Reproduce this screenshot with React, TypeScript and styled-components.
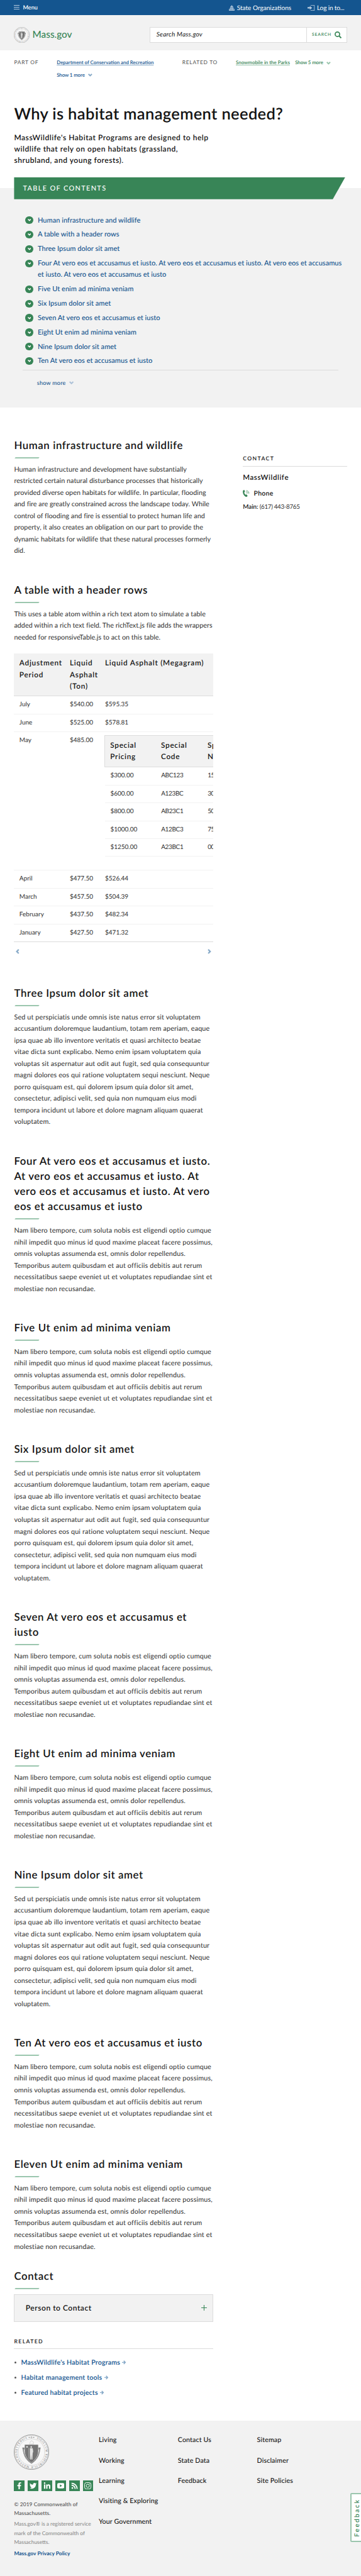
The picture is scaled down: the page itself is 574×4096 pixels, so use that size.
import React from 'react';
import styled, { createGlobalStyle } from 'styled-components';
import { FaFacebookF, FaTwitter, FaLinkedinIn, FaRss } from 'react-icons/fa';

const ink = '#141414';
const blue = '#14558f';
const blueSoft = '#89abc9';
const green = '#388557';
const greenSoft = '#9bc6ae';
const panel = '#f2f2f2';
const rule = '#dcdcdc';

/* 1rem is ten design pixels */
const Global = createGlobalStyle`
  html { font-size: 5.6055px; }
  body {
    margin: 0;
    background: #fff;
    color: ${ink};
    font-family: Lato, "Noto Sans", sans-serif;
    font-size: 2rem;
    font-weight: 400;
    overflow-x: hidden;
    text-rendering: geometricPrecision;
  }
  *, *::before, *::after { box-sizing: border-box; }
  h1, h2, h3, p, ul { margin: 0; padding: 0; font-weight: inherit; }
  ul { list-style: none; }
  svg { display: block; flex: none; }
`;

const Page = styled.div`
  position: relative;
  width: 102.4rem;
  height: 4096px;
  overflow: hidden;
  white-space: nowrap;
`;

/* ---------- header ---------- */
const TopBar = styled.nav`
  display: flex;
  justify-content: space-between;
  height: 4.3rem;
  padding: 0 4rem;
  background: ${blue};
  color: #fff;
`;
const MenuButton = styled.div`
  display: flex;
  align-items: center;
  gap: 1rem;
  height: 3.98rem;
  font-size: 1.63rem;
  font-weight: 600;
`;
const Burger = styled.span`
  width: 1.5rem;
  height: 1.2rem;
  border-top: 1px solid #b6cade;
  border-bottom: 1px solid #b6cade;
  background: linear-gradient(#b6cade, #b6cade) center / 100% 1px no-repeat;
`;
const Utilities = styled.div`
  display: flex;
  height: 4.5rem;
  font-size: 1.8rem;
`;
const Utility = styled.div<{ $w: number; $gap: number; $track?: number }>`
  display: flex;
  align-items: center;
  gap: ${(p) => p.$gap}rem;
  width: ${(p) => p.$w}rem;
  letter-spacing: ${(p) => p.$track ?? 0}rem;
`;
const Masthead = styled.header`
  display: flex;
  justify-content: space-between;
  height: 10rem;
  padding: 3.3rem 4rem 0;
  background: ${panel};
`;
const Brand = styled.div`
  display: flex;
  align-items: center;
  gap: 0.7rem;
  height: 4.6rem;
  color: ${green};
  font-size: 2.73rem;
  font-weight: 500;
`;
const SearchBox = styled.div`
  display: flex;
  width: 56rem;
  height: 4.6rem;
  border: 1px solid ${rule};
  background: #fff;
`;
const SearchInput = styled.div`
  flex: 1;
  padding-left: 1.8rem;
  font-size: 1.8rem;
  font-style: italic;
  letter-spacing: 0.045rem;
  line-height: 4.1rem;
`;
const SearchButton = styled.div`
  display: flex;
  align-items: center;
  justify-content: space-between;
  width: 11.3rem;
  padding: 0 1.4rem;
  border-left: 1px solid ${rule};
  color: ${green};
  font-size: 1.2rem;
  font-weight: 600;
  letter-spacing: 0.15rem;
`;

/* ---------- relations + title ---------- */
const Relations = styled.div`
  display: flex;
  height: 15.12rem;
  padding: 1.77rem 0 0 4rem;
  font-size: 1.41rem;
  font-weight: 600;
  line-height: 3.5rem;
`;
const RelationLabel = styled.div<{ $w: number }>`
  width: ${(p) => p.$w}rem;
  color: #535353;
  font-size: 1.5rem;
  font-weight: 400;
  letter-spacing: 0.13rem;
`;
const RelationLinks = styled.div<{ $w: number; $green?: boolean }>`
  display: flex;
  flex-wrap: wrap;
  align-content: flex-start;
  column-gap: 1.5rem;
  width: ${(p) => p.$w}rem;
  color: ${(p) => (p.$green ? green : blue)};
`;
const Underlined = styled.span<{ $green?: boolean }>`
  text-decoration: underline;
  text-decoration-color: ${(p) => (p.$green ? greenSoft : blueSoft)};
  text-decoration-thickness: 1px;
  text-underline-offset: 1px;
`;
const Toggle = styled.span`
  display: flex;
  align-items: center;
  gap: 0.9rem;
  letter-spacing: -0.02rem;
`;
const Title = styled.h1`
  height: 6rem;
  padding-left: 4rem;
  font-size: 4.55rem;
  font-weight: 600;
  letter-spacing: 0.062rem;
  line-height: 6rem;
`;
const Intro = styled.p`
  height: 14.9rem;
  padding: 1.97rem 0 0 4rem;
  font-size: 2.15rem;
  font-weight: 600;
  letter-spacing: 0.091rem;
  line-height: 3.28rem;
`;

/* ---------- table of contents ---------- */
const Toc = styled.section`
  height: 65.2rem;
  padding-left: 4rem;
  background: linear-gradient(#fff 3rem, ${panel} 3rem);
`;
const TocHead = styled.h2`
  width: 93.9rem;
  height: 6.2rem;
  padding-left: 2.5rem;
  background: ${green};
  clip-path: polygon(0 0, 100% 0, calc(100% - 3.5rem) 100%, 0 100%);
  color: #fff;
  font-size: 1.95rem;
  font-weight: 500;
  letter-spacing: 0.24rem;
  line-height: 6.3rem;
`;
const TocList = styled.ul`
  width: 89.6rem;
  height: 48.55rem;
  margin-left: 2.4rem;
  padding: 4.42rem 0 0 0.8rem;
  border-bottom: 1px solid ${rule};
`;
const TocItem = styled.li`
  display: flex;
  gap: 1.3rem;
  margin-bottom: 0.77rem;
  color: ${blue};
  font-size: 1.98rem;
  font-weight: 500;
  line-height: 3.3rem;
`;
const TocDot = styled.span`
  display: grid;
  flex: none;
  place-items: center;
  width: 2.2rem;
  height: 2.2rem;
  margin-top: 0.45rem;
  border-radius: 50%;
  background: ${green};
`;
const ShowMore = styled.div`
  display: flex;
  align-items: center;
  gap: 0.9rem;
  height: 7rem;
  padding-left: 6.5rem;
  color: ${blue};
  font-size: 1.6rem;
  font-weight: 500;
  letter-spacing: 0.045rem;
`;

/* ---------- body ---------- */
const Columns = styled.main`
  display: flex;
  height: 571.1rem;
  padding: 8.68rem 4rem 0;
`;
const Article = styled.div`
  width: 56.4rem;
  margin-right: 8.5rem;
`;
const Block = styled.section<{ $after?: number }>`
  margin-bottom: ${(p) => p.$after ?? 7.16}rem;
`;
const Heading = styled.h2`
  font-size: 3rem;
  font-weight: 600;
  letter-spacing: 0.106rem;
  line-height: 4.3rem;
`;
const Accent = styled.div`
  width: 6.8rem;
  height: 0.34rem;
  margin: 1.23rem 0 1.58rem 0.2rem;
  background: ${greenSoft};
  transform: skewX(-35deg);
`;
const Copy = styled.p<{ $track?: number }>`
  color: #303030;
  font-size: 1.93rem;
  letter-spacing: ${(p) => p.$track ?? 0}rem;
  line-height: 3.303rem;
`;
const Sidebar = styled.aside`
  width: 29.5rem;
  padding-top: 4.7rem;
`;
const Caps = styled.h3`
  padding-bottom: 0.9rem;
  border-bottom: 1px solid ${rule};
  font-size: 1.54rem;
  font-weight: 600;
  letter-spacing: 0.247rem;
  line-height: 2.4rem;
`;
const Org = styled.div`
  margin-top: 1.8rem;
  font-size: 2.05rem;
  font-weight: 600;
  letter-spacing: 0.11rem;
  line-height: 2.8rem;
`;
const PhoneTitle = styled.div`
  display: flex;
  align-items: center;
  gap: 1.2rem;
  height: 2.8rem;
  margin-top: 1.6rem;
  font-size: 1.87rem;
  font-weight: 600;
  letter-spacing: 0.05rem;
`;
const PhoneLine = styled.div`
  margin-top: 1.2rem;
  color: #303030;
  font-size: 1.75rem;
  letter-spacing: -0.056rem;
  line-height: 2.6rem;
  b {
    color: ${ink};
    font-weight: 600;
    letter-spacing: 0;
  }
`;

/* ---------- data table ---------- */
const TableView = styled.div`
  height: 81.9rem;
  margin-top: 2.85rem;
  overflow: hidden;
  border-bottom: 1px solid ${rule};
`;
const HeadRow = styled.div`
  display: grid;
  grid-template-columns: 14.3rem 10rem 1fr;
  height: 12.1rem;
  padding: 1.05rem 0 0 1.5rem;
  border-bottom: 1px solid ${rule};
  background: ${panel};
  font-size: 2.1rem;
  font-weight: 600;
  letter-spacing: 0.135rem;
  line-height: 3.3rem;
`;
const Row = styled.div<{ $h?: number }>`
  display: grid;
  grid-template-columns: 14.3rem 10rem 1fr;
  height: ${(p) => p.$h ?? 5.1}rem;
  padding-left: 1.5rem;
  border-bottom: 1px solid ${panel};
  color: #303030;
  font-size: 1.78rem;
  line-height: 4.85rem;
  &:last-child { border-bottom: 0; }
`;
const Nested = styled.div`
  width: 50rem;
  margin: 0.85rem 0 0 -0.2rem;
`;
const NestedHead = styled.div`
  display: grid;
  grid-template-columns: 14.4rem 13.2rem 1fr;
  height: 9.1rem;
  padding: 1rem 0 0 1.5rem;
  border: 1px solid ${rule};
  background: ${panel};
  color: ${ink};
  font-size: 2.1rem;
  font-weight: 600;
  letter-spacing: 0.125rem;
  line-height: 3.3rem;
`;
const NestedRow = styled.div`
  display: grid;
  grid-template-columns: 14.4rem 13.2rem 1fr;
  height: 5.08rem;
  margin-left: 0.2rem;
  padding-left: 1.5rem;
  border-bottom: 1px solid ${panel};
  line-height: 4.85rem;
  span + span { letter-spacing: -0.06rem; }
`;
const Pager = styled.div`
  display: flex;
  align-items: center;
  justify-content: space-between;
  height: 5.1rem;
  padding: 0 0.3rem;
`;

/* ---------- contact + related ---------- */
const Accordion = styled.div`
  display: flex;
  align-items: center;
  justify-content: space-between;
  height: 7.7rem;
  padding: 0 1.6rem 0.2rem 3.1rem;
  border: 1px solid ${rule};
  background: ${panel};
  font-size: 2.15rem;
  font-weight: 600;
  letter-spacing: 0.092rem;
`;
const RelatedHead = styled(Caps)`
  margin-top: 4.3rem;
`;
const RelatedList = styled.ul`
  padding-top: 1.65rem;
`;
const RelatedItem = styled.li`
  display: flex;
  align-items: center;
  height: 4.28rem;
  color: ${blue};
  font-size: 1.9rem;
  font-weight: 600;
  letter-spacing: 0.031rem;
  svg { margin-left: 0.6rem; }
`;
const Bullet = styled.span`
  width: 0.6rem;
  height: 0.6rem;
  margin: 0 1.3rem 0 0.1rem;
  border-radius: 50%;
  background: #535353;
`;

/* ---------- footer ---------- */
const Footer = styled.footer`
  display: flex;
  height: 45rem;
  padding-left: 4rem;
  background: ${panel};
`;
const About = styled.div`
  width: 24rem;
  padding-top: 4rem;
  color: #535353;
  font-size: 1.5rem;
  line-height: 2.58rem;
`;
const Socials = styled.div`
  display: flex;
  gap: 0.9rem;
  margin: 3rem 0 2.45rem;
`;
const Social = styled.span`
  display: grid;
  place-items: center;
  width: 3rem;
  height: 3rem;
  background: ${green};
  color: #fff;
`;
const Copyright = styled.p`
  font-weight: 500;
  letter-spacing: 0.018rem;
`;
const Legal = styled.p`
  margin: 0.5rem 0;
  color: #868686;
`;
const Privacy = styled.p`
  padding-top: 0.1rem;
  color: ${blue};
  font-weight: 700;
  letter-spacing: 0.004rem;
`;
const FooterLinks = styled.ul`
  width: 22.45rem;
  padding-top: 2.75rem;
  font-size: 1.9rem;
  font-weight: 500;
  letter-spacing: 0.022rem;
  line-height: 5.77rem;
`;
const FeedbackTab = styled.div`
  position: absolute;
  top: 707.2rem;
  right: -0.4rem;
  display: grid;
  place-items: center;
  width: 3.4rem;
  height: 13.8rem;
  padding-left: 0.4rem;
  border: 2px solid ${greenSoft};
  border-radius: 2px;
  background: #fff;
  color: ${green};
  font-size: 1.85rem;
  font-weight: 600;
  letter-spacing: 0.38rem;
  span {
    writing-mode: vertical-rl;
    transform: rotate(180deg);
    line-height: 1;
  }
`;

/* ---------- drawings ---------- */
const r = (n: number) => `${n / 10}rem`;

const Chevron = ({ w = 12, color, turn = 0 }: { w?: number; color: string; turn?: number }) => (
  <svg viewBox="0 0 12 12" fill={color} width={r(w)} height={r(w)}>
    <path transform={`rotate(${turn} 6 6)`} d="M0 4.400 2.400 2 6 5.400 9.600 2 12 4.400 6 10.400z" />
  </svg>
);

const Arrow = () => (
  <svg viewBox="0 0 12 12" fill={blueSoft} width={r(12)} height={r(12)}>
    <path d="M0 4.800h6L3.900 2.400 5.900.6 11.400 6l-5.500 5.400-2-1.800L6 7.200H0z" />
  </svg>
);

const StateHouse = () => (
  <svg viewBox="0 0 16 16" fill="#b6cade" width={r(16)} height={r(16)}>
    <path d="M7.500 0h1v2.200C11 2.500 12.300 4.200 12.300 6.200H3.700C3.700 4.200 5 2.500 7.500 2.200z" />
    <path
      fillRule="evenodd"
      d="M3 7h10v4.200h3V16H0v-4.800h3zM4.300 8.500v1.600h1.500V8.500zm2.900 0v1.600h1.600V8.500zm2.900 0v1.600h1.600V8.500zM1.500 12.700v1.600H3v-1.600zm2.900 0v1.600h1.500v-1.600zm2.900 0v1.600h1.500v-1.600zm2.900 0v1.600h1.500v-1.600zm2.900 0v1.600h1.500v-1.600z"
    />
  </svg>
);

const LoginIcon = () => (
  <svg viewBox="0 0 20 16" fill="#b6cade" width={r(20)} height={r(16)}>
    <path d="M0 6h6.500V2.800L13 8l-6.500 5.200V10H0z" />
    <path d="M8.500 0H20v16H8.500v-1.500h10v-13h-10z" />
  </svg>
);

const Magnifier = () => (
  <svg viewBox="0 0 20 20" fill="none" stroke={green} width={r(20)} height={r(20)}>
    <circle cx="8" cy="8" r="6.400" strokeWidth="3" />
    <path d="M12.300 12.300 18.700 18.700" strokeWidth="3.600" />
  </svg>
);

const PhoneIcon = () => (
  <svg viewBox="0 0 19 20" fill={green} width={r(19)} height={r(20)}>
    <path d="M1.500 1 4.500.2 6.400 5.300 4.200 6.600c0 2.600 1.800 5.600 4 7.200l2.300-1.200 3.300 4.200-2.100 2.500c-1.300.7-3.300.5-5-1C2.400 15 .2 10.500.2 5.400.2 3.500.6 1.900 1.500 1z" />
    <g fill="none" stroke={green} strokeWidth="1.300">
      <path d="M9.500 7.500c1.300.2 2.200 1.200 2.300 2.600" />
      <path d="M9.800 4.600c2.900.2 4.900 2.400 5 5.500" />
      <path d="M10 1.700c4.500.3 7.600 3.600 7.800 8.400" />
    </g>
  </svg>
);

const Plus = () => (
  <svg viewBox="0 0 16 16" stroke={green} strokeWidth="1.900" width={r(16)} height={r(16)}>
    <path d="M8 0v16M0 8h16" />
  </svg>
);

const YouTube = () => (
  <svg viewBox="0 0 20 16" fill="#fff" width={r(20)} height={r(16)}>
    <path fillRule="evenodd" d="M4 .5h12Q20 .5 20 4.500v7q0 4-4 4H4q-4 0-4-4v-7Q0 .5 4 .5zM7.500 4.500v7L14 8z" />
  </svg>
);

const Instagram = () => (
  <svg viewBox="0 0 20 20" fill="none" stroke="#fff" strokeWidth="1.700" width={r(20)} height={r(20)}>
    <rect x="1" y="1" width="18" height="18" rx="5" />
    <circle cx="10" cy="10" r="4.500" />
    <circle cx="15.200" cy="4.800" r=".8" fill="#fff" strokeWidth=".6" />
  </svg>
);

const Seal = ({ size, id }: { size: number; id: string }) => (
  <svg viewBox="0 0 100 100" width={r(size)} height={r(size)}>
    <defs>
      <path id={id} d="M50 50m0 -40.500a40.500 40.500 0 1 1 -.01 0" />
    </defs>
    <circle cx="50" cy="50" r="49.300" fill="#f7f7f7" stroke="#757575" strokeWidth="1.200" />
    <circle cx="50" cy="50" r="47.300" fill="none" stroke="#8d8d8d" strokeWidth=".6" />
    <circle cx="50" cy="50" r="37.700" fill="none" stroke="#8d8d8d" strokeWidth=".9" strokeDasharray="1 .7" />
    <text fill="#757575" fontFamily="'Liberation Serif', serif" fontSize="8.200" fontWeight="400">
      <textPath href={`#${id}`} startOffset="15" textLength="226">
        SIGILLUM REIPUBLICÆ MASSACHUSETTENSIS
      </textPath>
    </text>
    <path d="M41 8l4-1.500v3zM59 8l-4-1.500v3z" fill="#757575" />
    <circle cx="50" cy="8" r="1.800" fill="none" stroke="#757575" strokeWidth="1" />
    <path d="M43 27h14M45 25c2-4 4-7 5-8l6 5-1 4" fill="none" stroke="#b5b5b5" strokeWidth=".9" />
    <path
      d="M27 38c0 5 0 10 2 15 2 8 6 15 12 21 3 3 6 5 9 7 3-2 6-4 9-7 6-6 10-13 12-21 2-5 2-10 2-15"
      fill="none"
      stroke="#7a7a7a"
      strokeWidth="3.200"
      strokeDasharray="2.600 .5"
    />
    <path d="M24 37h6v6h-5zM76 37h-6v6h5z" fill="#858585" />
    <path d="M31 29h38v17c0 14-8 26-19 33-11-7-19-19-19-33z" fill="#757575" />
    <path d="M37.500 31.800l.9 2.200 2.300.1-1.800 1.500.6 2.300-2-1.300-2 1.300.6-2.300-1.800-1.500 2.300-.1z" fill="#f2f2f2" />
    <circle cx="49.300" cy="35.500" r="2.300" fill="#e4e4e4" />
    <path d="M45.500 39h8l1.500 9-1.500 5-1 18h-2.500l-.6-14-1 14H46l-.6-19z" fill="#e4e4e4" />
    <path d="M42.500 37c-1 10-1 20 .5 32" fill="none" stroke="#dadada" strokeWidth=".8" />
  </svg>
);

/* ---------- content ---------- */
const Lines = ({ of }: { of: string[] }) => (
  <>
    {of.map((line, i) => (
      <React.Fragment key={i}>
        {i > 0 && <br />}
        {line}
      </React.Fragment>
    ))}
  </>
);

const sed = [
  'Sed ut perspiciatis unde omnis iste natus error sit voluptatem',
  'accusantium doloremque laudantium, totam rem aperiam, eaque',
  'ipsa quae ab illo inventore veritatis et quasi architecto beatae',
  'vitae dicta sunt explicabo. Nemo enim ipsam voluptatem quia',
  'voluptas sit aspernatur aut odit aut fugit, sed quia consequuntur',
  'magni dolores eos qui ratione voluptatem sequi nesciunt. Neque',
  'porro quisquam est, qui dolorem ipsum quia dolor sit amet,',
  'consectetur, adipisci velit, sed quia non numquam eius modi',
  'tempora incidunt ut labore et dolore magnam aliquam quaerat',
  'voluptatem.',
];
const nam = [
  'Nam libero tempore, cum soluta nobis est eligendi optio cumque',
  'nihil impedit quo minus id quod maxime placeat facere possimus,',
  'omnis voluptas assumenda est, omnis dolor repellendus.',
  'Temporibus autem quibusdam et aut officiis debitis aut rerum',
  'necessitatibus saepe eveniet ut et voluptates repudiandae sint et',
  'molestiae non recusandae.',
];
const human = [
  'Human infrastructure and development have substantially',
  'restricted certain natural disturbance processes that historically',
  'provided diverse open habitats for wildlife. In particular, flooding',
  'and fire are greatly constrained across the landscape today. While',
  'control of flooding and fire is essential to protect human life and',
  'property, it also creates an obligation on our part to provide the',
  'dynamic habitats for wildlife that these natural processes formerly',
  'did.',
];
const tableIntro = [
  'This uses a table atom within a rich text atom to simulate a table',
  'added within a rich text field. The richText.js file adds the wrappers',
  'needed for responsiveTable.js to act on this table.',
];
const sections: { title: string[]; body: string[]; track: number; after?: number }[] = [
  { title: ['Three Ipsum dolor sit amet'], body: sed, track: 0.024 },
  {
    title: [
      'Four At vero eos et accusamus et iusto.',
      'At vero eos et accusamus et iusto. At',
      'vero eos et accusamus et iusto. At vero',
      'eos et accusamus et iusto',
    ],
    body: nam,
    track: 0.0275,
  },
  { title: ['Five Ut enim ad minima veniam'], body: nam, track: 0.0275 },
  { title: ['Six Ipsum dolor sit amet'], body: sed, track: 0.024 },
  { title: ['Seven At vero eos et accusamus et', 'iusto'], body: nam, track: 0.0275 },
  { title: ['Eight Ut enim ad minima veniam'], body: nam, track: 0.0275 },
  { title: ['Nine Ipsum dolor sit amet'], body: sed, track: 0.024 },
  { title: ['Ten At vero eos et accusamus et iusto'], body: nam, track: 0.0275 },
  { title: ['Eleven Ut enim ad minima veniam'], body: nam, track: 0.0275, after: 4.4 },
];
const toc = [
  ['Human infrastructure and wildlife'],
  ['A table with a header rows'],
  ['Three Ipsum dolor sit amet'],
  [
    'Four At vero eos et accusamus et iusto. At vero eos et accusamus et iusto. At vero eos et accusamus',
    'et iusto. At vero eos et accusamus et iusto',
  ],
  ['Five Ut enim ad minima veniam'],
  ['Six Ipsum dolor sit amet'],
  ['Seven At vero eos et accusamus et iusto'],
  ['Eight Ut enim ad minima veniam'],
  ['Nine Ipsum dolor sit amet'],
  ['Ten At vero eos et accusamus et iusto'],
];
const special = [
  ['$300.00', 'ABC123', '15'],
  ['$600.00', 'A123BC', '30'],
  ['$800.00', 'AB23C1', '50'],
  ['$1000.00', 'A12BC3', '75'],
  ['$1250.00', 'A23BC1', '00'],
];
const early = [
  ['July', '$540.00', '$595.35'],
  ['June', '$525.00', '$578.81'],
];
const late = [
  ['April', '$477.50', '$526.44'],
  ['March', '$457.50', '$504.39'],
  ['February', '$437.50', '$482.34'],
  ['January', '$427.50', '$471.32'],
];
const footerLinks = [
  ['Living', 'Working', 'Learning', 'Visiting & Exploring', 'Your Government'],
  ['Contact Us', 'State Data', 'Feedback'],
  ['Sitemap', 'Disclaimer', 'Site Policies'],
];

const Cells = ({ of }: { of: string[] }) => (
  <>
    {of.map((c) => (
      <span key={c}>{c}</span>
    ))}
  </>
);

export default function App() {
  return (
    <Page>
      <Global />
      <TopBar>
        <MenuButton>
          <Burger />
          Menu
        </MenuButton>
        <Utilities>
          <Utility $w={22.4} $gap={0.7}>
            <StateHouse />
            State Organizations
          </Utility>
          <Utility $w={11.1} $gap={0.6} $track={-0.026}>
            <LoginIcon />
            Log in to...
          </Utility>
        </Utilities>
      </TopBar>
      <Masthead>
        <Brand>
          <Seal size={45} id="ring-small" />
          Mass.gov
        </Brand>
        <SearchBox>
          <SearchInput>Search Mass.gov</SearchInput>
          <SearchButton>
            SEARCH
            <Magnifier />
          </SearchButton>
        </SearchBox>
      </Masthead>
      <Relations>
        <RelationLabel $w={12.1}>PART OF</RelationLabel>
        <RelationLinks $w={35.6}>
          <Underlined>Department of Conservation and Recreation</Underlined>
          <Toggle>
            Show 1 more
            <Chevron color={blueSoft} />
          </Toggle>
        </RelationLinks>
        <RelationLabel $w={15.2}>RELATED TO</RelationLabel>
        <RelationLinks $w={32} $green>
          <Underlined $green>Snowmobile in the Parks</Underlined>
          <Toggle>
            Show 5 more
            <Chevron color={greenSoft} />
          </Toggle>
        </RelationLinks>
      </Relations>
      <Title>Why is habitat management needed?</Title>
      <Intro>
        <Lines
          of={[
            "MassWildlife's Habitat Programs are designed to help",
            'wildlife that rely on open habitats (grassland,',
            'shrubland, and young forests).',
          ]}
        />
      </Intro>
      <Toc>
        <TocHead>TABLE OF CONTENTS</TocHead>
        <TocList>
          {toc.map((lines) => (
            <TocItem key={lines[0]}>
              <TocDot>
                <Chevron w={10} color="#fff" />
              </TocDot>
              <span>
                <Lines of={lines} />
              </span>
            </TocItem>
          ))}
        </TocList>
        <ShowMore>
          show more
          <Chevron w={13} color="#adc2d8" />
        </ShowMore>
      </Toc>
      <Columns>
        <Article>
          <Block>
            <Heading>Human infrastructure and wildlife</Heading>
            <Accent />
            <Copy $track={0.003}>
              <Lines of={human} />
            </Copy>
          </Block>
          <Block $after={7.12}>
            <Heading>A table with a header rows</Heading>
            <Accent />
            <Copy $track={0.003}>
              <Lines of={tableIntro} />
            </Copy>
            <TableView>
              <HeadRow>
                <span>
                  <Lines of={['Adjustment', 'Period']} />
                </span>
                <span>
                  <Lines of={['Liquid', 'Asphalt', '(Ton)']} />
                </span>
                <span>Liquid Asphalt (Megagram)</span>
              </HeadRow>
              {early.map((row) => (
                <Row key={row[0]}>
                  <Cells of={row} />
                </Row>
              ))}
              <Row $h={39.2}>
                <span>May</span>
                <span>$485.00</span>
                <Nested>
                  <NestedHead>
                    <span>
                      <Lines of={['Special', 'Pricing']} />
                    </span>
                    <span>
                      <Lines of={['Special', 'Code']} />
                    </span>
                    <span>
                      <Lines of={['Special', 'Number']} />
                    </span>
                  </NestedHead>
                  {special.map((row) => (
                    <NestedRow key={row[0]}>
                      <Cells of={row} />
                    </NestedRow>
                  ))}
                </Nested>
              </Row>
              {late.map((row) => (
                <Row key={row[0]}>
                  <Cells of={row} />
                </Row>
              ))}
            </TableView>
            <Pager>
              <Chevron w={14} color={blueSoft} turn={90} />
              <Chevron w={14} color={blueSoft} turn={-90} />
            </Pager>
          </Block>
          {sections.map((s) => (
            <Block key={s.title[0]} $after={s.after}>
              <Heading>
                <Lines of={s.title} />
              </Heading>
              <Accent />
              <Copy $track={s.track}>
                <Lines of={s.body} />
              </Copy>
            </Block>
          ))}
          <Heading>Contact</Heading>
          <Accent />
          <Accordion>
            Person to Contact
            <Plus />
          </Accordion>
          <RelatedHead>RELATED</RelatedHead>
          <RelatedList>
            {["MassWildlife's Habitat Programs", 'Habitat management tools', 'Featured habitat projects'].map((t) => (
              <RelatedItem key={t}>
                <Bullet />
                {t}
                <Arrow />
              </RelatedItem>
            ))}
          </RelatedList>
        </Article>
        <Sidebar>
          <Caps>CONTACT</Caps>
          <Org>MassWildlife</Org>
          <PhoneTitle>
            <PhoneIcon />
            Phone
          </PhoneTitle>
          <PhoneLine>
            <b>Main:</b> (617) 443-8765
          </PhoneLine>
        </Sidebar>
      </Columns>
      <Footer>
        <About>
          <Seal size={100} id="ring-large" />
          <Socials>
            <Social><FaFacebookF size="2rem" /></Social>
            <Social><FaTwitter size="2rem" /></Social>
            <Social><FaLinkedinIn size="2.1rem" /></Social>
            <Social><YouTube /></Social>
            <Social><FaRss size="2rem" /></Social>
            <Social><Instagram /></Social>
          </Socials>
          <Copyright>
            <Lines of={['© 2019 Commonwealth of', 'Massachusetts.']} />
          </Copyright>
          <Legal>
            <Lines of={['Mass.gov® is a registered service', 'mark of the Commonwealth of', 'Massachusetts.']} />
          </Legal>
          <Privacy>Mass.gov Privacy Policy</Privacy>
        </About>
        {footerLinks.map((col) => (
          <FooterLinks key={col[0]}>
            {col.map((t) => (
              <li key={t}>{t}</li>
            ))}
          </FooterLinks>
        ))}
      </Footer>
      <FeedbackTab>
        <span>Feedback</span>
      </FeedbackTab>
    </Page>
  );
}
